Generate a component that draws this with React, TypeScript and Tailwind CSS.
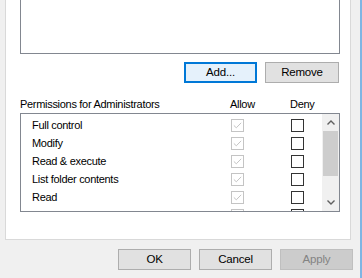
import React from "react";

const rows = ["Full control", "Modify", "Read & execute", "List folder contents", "Read", ""];

const font = { fontFamily: '"Liberation Sans", Arial, sans-serif' };

function Check({ disabled, checked }: { disabled?: boolean; checked?: boolean }) {
  return (
    <span
      className={`flex h-[13px] w-[13px] items-center justify-center border bg-white ${
        disabled ? "border-[#c4c4c4]" : "border-[#333333]"
      }`}
    >
      {checked && (
        <svg width="9" height="7" viewBox="0 0 9 7" fill="none">
          <path d="M0.8 3.4 L3.3 5.8 L8.2 0.8" stroke="#c4c4c4" strokeWidth="1" />
        </svg>
      )}
    </span>
  );
}

function Btn({
  label,
  focused,
  disabled,
  w,
}: {
  label: string;
  focused?: boolean;
  disabled?: boolean;
  w: string;
}) {
  return (
    <button
      className={`flex h-[21px] items-center justify-center text-[11.5px] leading-none tracking-[-0.2px] ${w} ${
        focused
          ? "border-2 border-[#0078d7] bg-[#e5f1fb] text-black"
          : disabled
          ? "border border-[#bfbfbf] bg-[#cccccc] text-[#838383]"
          : "border border-[#adadad] bg-[#e1e1e1] text-black"
      }`}
    >
      {label}
    </button>
  );
}

export default function App() {
  return (
    <div
      style={font}
      className="h-[278px] w-[362px] overflow-hidden border-r-2 border-[#7fb5e3] bg-[#f0f0f0] text-[11px] tracking-[-0.3px] text-black"
    >
      <div className="ml-[5px] h-[240px] w-[346px] border border-t-0 border-[#d9d9d9] bg-white px-[14px]">
        <div className="h-[54px] w-[320px] border border-t-0 border-[#828790] bg-white" />

        <div className="mt-[8px] flex w-[320px] justify-end gap-[8px] pr-[1px]">
          <Btn label="Add..." focused w="w-[73px]" />
          <Btn label="Remove" w="w-[74px]" />
        </div>

        <div className="mt-[14px] flex h-[15px] w-[320px] items-center leading-[15px]">
          <span className="w-[210px]">Permissions for Administrators</span>
          <span className="w-[60px]">Allow</span>
          <span>Deny</span>
        </div>

        <div className="mt-[1px] flex h-[99px] w-[320px] border border-[#828790] bg-white">
          <div className="flex-1 overflow-hidden pt-[2px]">
            {rows.map((r, i) => (
              <div key={i} className="flex h-[18px] items-center">
                <span className="w-[210px] pl-[11px] pt-[1px] leading-[17px]">{r}</span>
                <span className="w-[60px]">
                  <Check disabled checked />
                </span>
                <span>
                  <Check />
                </span>
              </div>
            ))}
          </div>
          <div className="flex w-[17px] flex-col bg-[#f0f0f0]">
            <div className="flex h-[17px] items-center justify-center">
              <svg width="8" height="5" viewBox="0 0 8 5" fill="none">
                <path d="M0.5 4.5 L4 1 L7.5 4.5" stroke="#606060" strokeWidth="1.4" />
              </svg>
            </div>
            <div className="mx-[1px] h-[45px] bg-[#cdcdcd]" />
            <div className="flex-1" />
            <div className="flex h-[17px] items-center justify-center">
              <svg width="8" height="5" viewBox="0 0 8 5" fill="none">
                <path d="M0.5 0.5 L4 4 L7.5 0.5" stroke="#606060" strokeWidth="1.4" />
              </svg>
            </div>
          </div>
        </div>
      </div>

      <div className="mt-[9px] flex justify-end gap-[8px] pr-[7px]">
        <Btn label="OK" w="w-[73px]" />
        <Btn label="Cancel" w="w-[73px]" />
        <Btn label="Apply" disabled w="w-[73px]" />
      </div>
    </div>
  );
}
